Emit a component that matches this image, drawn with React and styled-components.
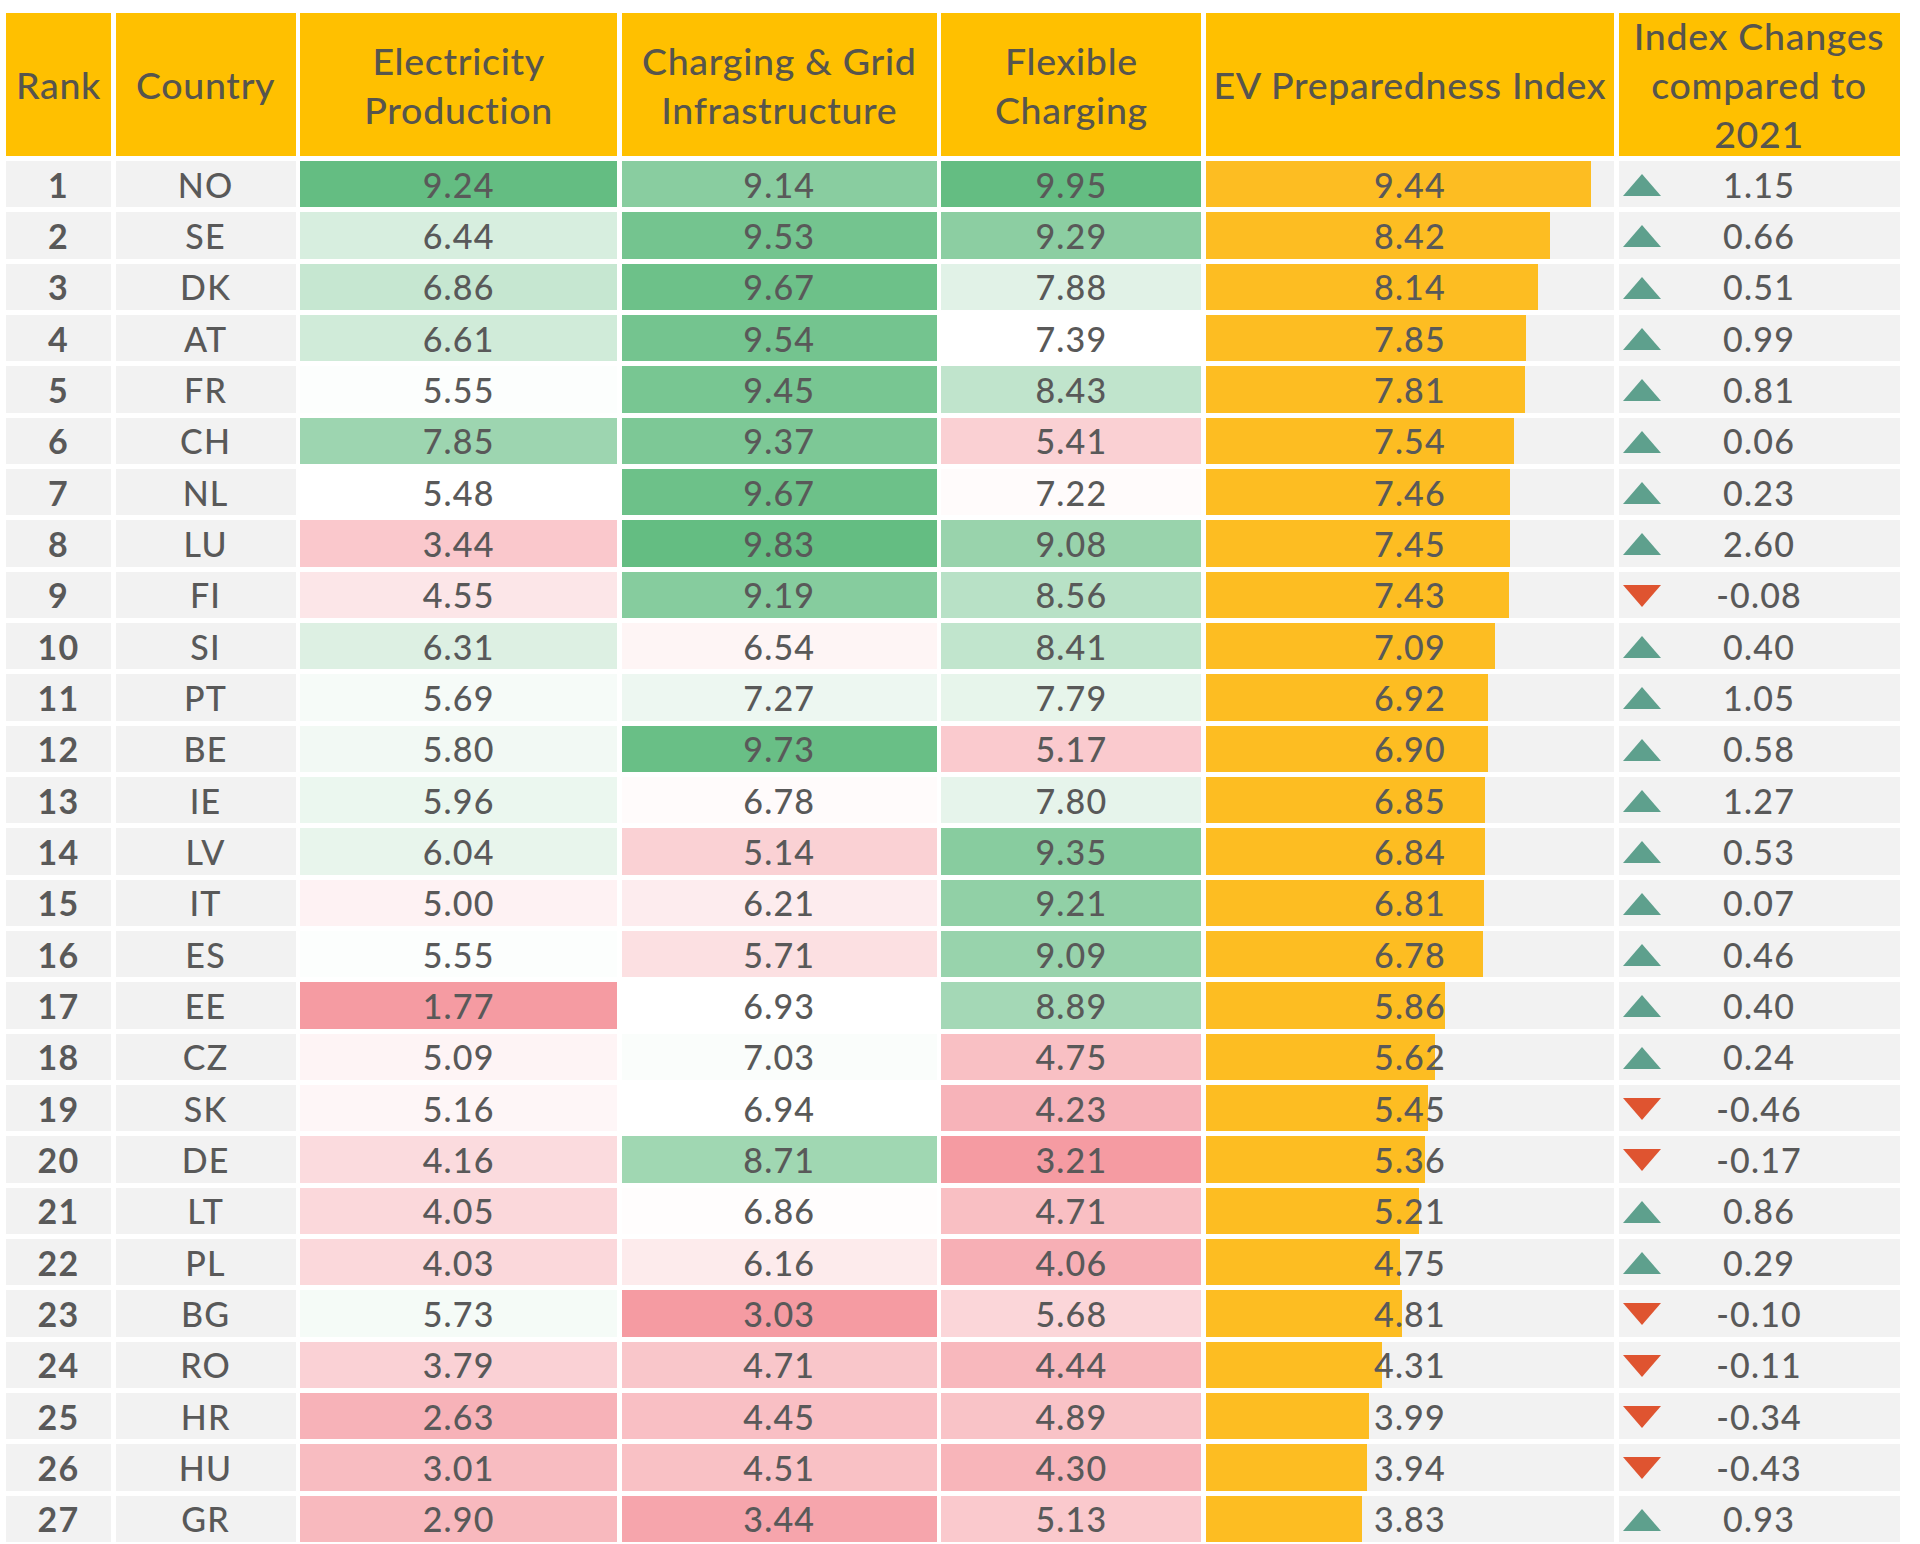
import React from "react";
import styled, { createGlobalStyle } from "styled-components";

const GlobalStyle = createGlobalStyle`
  html, body { margin: 0; padding: 0; background: #ffffff; }
  body { font-family: Lato, "Liberation Sans", sans-serif; }
`;

const rows = [
  [1, "NO", 9.24, 9.14, 9.95, 9.44, 1.15],
  [2, "SE", 6.44, 9.53, 9.29, 8.42, 0.66],
  [3, "DK", 6.86, 9.67, 7.88, 8.14, 0.51],
  [4, "AT", 6.61, 9.54, 7.39, 7.85, 0.99],
  [5, "FR", 5.55, 9.45, 8.43, 7.81, 0.81],
  [6, "CH", 7.85, 9.37, 5.41, 7.54, 0.06],
  [7, "NL", 5.48, 9.67, 7.22, 7.46, 0.23],
  [8, "LU", 3.44, 9.83, 9.08, 7.45, 2.6],
  [9, "FI", 4.55, 9.19, 8.56, 7.43, -0.08],
  [10, "SI", 6.31, 6.54, 8.41, 7.09, 0.4],
  [11, "PT", 5.69, 7.27, 7.79, 6.92, 1.05],
  [12, "BE", 5.8, 9.73, 5.17, 6.9, 0.58],
  [13, "IE", 5.96, 6.78, 7.8, 6.85, 1.27],
  [14, "LV", 6.04, 5.14, 9.35, 6.84, 0.53],
  [15, "IT", 5.0, 6.21, 9.21, 6.81, 0.07],
  [16, "ES", 5.55, 5.71, 9.09, 6.78, 0.46],
  [17, "EE", 1.77, 6.93, 8.89, 5.86, 0.4],
  [18, "CZ", 5.09, 7.03, 4.75, 5.62, 0.24],
  [19, "SK", 5.16, 6.94, 4.23, 5.45, -0.46],
  [20, "DE", 4.16, 8.71, 3.21, 5.36, -0.17],
  [21, "LT", 4.05, 6.86, 4.71, 5.21, 0.86],
  [22, "PL", 4.03, 6.16, 4.06, 4.75, 0.29],
  [23, "BG", 5.73, 3.03, 5.68, 4.81, -0.1],
  [24, "RO", 3.79, 4.71, 4.44, 4.31, -0.11],
  [25, "HR", 2.63, 4.45, 4.89, 3.99, -0.34],
  [26, "HU", 3.01, 4.51, 4.3, 3.94, -0.43],
  [27, "GR", 2.9, 3.44, 5.13, 3.83, 0.93],
];

const GREEN = [100, 189, 130];
const PINK = [245, 155, 162];
const WHITE = [255, 255, 255];

function stats(idx) {
  const vals = rows.map((r) => r[idx]).sort((a, b) => a - b);
  return { min: vals[0], med: vals[Math.floor(vals.length / 2)], max: vals[vals.length - 1] };
}
const colStats = { 2: stats(2), 3: stats(3), 4: stats(4) };

function mix(a, b, t) {
  const c = a.map((v, i) => Math.round(v + (b[i] - v) * t));
  return `rgb(${c[0]}, ${c[1]}, ${c[2]})`;
}
function scaleColor(v, idx) {
  const { min, med, max } = colStats[idx];
  if (v >= med) return mix(WHITE, GREEN, max === med ? 0 : (v - med) / (max - med));
  return mix(WHITE, PINK, (med - v) / (med - min));
}

const Page = styled.div`
  padding: 13px 20px 2px 6px;
`;

const Table = styled.div`
  display: grid;
  grid-template-columns: 105px 180px 317px 315px 260px 408px 281px;
  grid-template-rows: 143px repeat(27, 46.33px);
  column-gap: 4.6px;
  row-gap: 5px;
  width: 1894px;
`;

const Row = styled.div`
  display: contents;
`;

const HeaderCell = styled.div`
  background: #ffc000;
  color: #57554d;
  font-size: 37.5px;
  font-weight: 500;
  line-height: 49px;
  letter-spacing: 0.7px;
  display: flex;
  align-items: center;
  justify-content: center;
  text-align: center;
  white-space: nowrap;
  overflow: visible;
`;

const Cell = styled.div`
  background: ${(p) => p.$bg || "#f2f2f2"};
  color: #595959;
  font-size: 34px;
  font-weight: ${(p) => (p.$bold ? 700 : 500)};
  display: flex;
  align-items: center;
  justify-content: center;
  letter-spacing: 1.2px;
`;

const BarCell = styled(Cell)`
  background: linear-gradient(
    to right,
    #fdbd22 0,
    #fdbd22 ${(p) => p.$pct}%,
    #f2f2f2 ${(p) => p.$pct}%,
    #f2f2f2 100%
  );
`;

const ChangeCell = styled.div`
  background: #f2f2f2;
  color: #595959;
  font-size: 34px;
  font-weight: 500;
  letter-spacing: 1.2px;
  display: grid;
  grid-template-columns: 38px 1fr 38px;
  align-items: center;
  padding: 0 4px;
  text-align: center;
`;

const Arrow = styled.svg`
  display: block;
  width: 38px;
  height: 22px;
  margin-top: 2px;
`;

function Trend({ up }) {
  return (
    <Arrow viewBox="0 0 38 22">
      {up ? (
        <polygon points="19,0 38,22 0,22" fill="#5ea08d" />
      ) : (
        <polygon points="0,0 38,0 19,22" fill="#df5430" />
      )}
    </Arrow>
  );
}

const fmt = (v) => v.toFixed(2);

export default function App() {
  return (
    <>
      <GlobalStyle />
      <Page>
        <Table>
          <Row>
            <HeaderCell>Rank</HeaderCell>
            <HeaderCell>Country</HeaderCell>
            <HeaderCell>
              Electricity
              <br />
              Production
            </HeaderCell>
            <HeaderCell>
              Charging &amp; Grid
              <br />
              Infrastructure
            </HeaderCell>
            <HeaderCell>
              Flexible
              <br />
              Charging
            </HeaderCell>
            <HeaderCell>EV Preparedness Index</HeaderCell>
            <HeaderCell>
              Index Changes
              <br />
              compared to
              <br />
              2021
            </HeaderCell>
          </Row>
          {rows.map((r) => (
            <Row key={r[0]}>
              <Cell $bold>{r[0]}</Cell>
              <Cell>{r[1]}</Cell>
              <Cell $bg={scaleColor(r[2], 2)}>{fmt(r[2])}</Cell>
              <Cell $bg={scaleColor(r[3], 3)}>{fmt(r[3])}</Cell>
              <Cell $bg={scaleColor(r[4], 4)}>{fmt(r[4])}</Cell>
              <BarCell $pct={(r[5] * 10).toFixed(1)}>{fmt(r[5])}</BarCell>
              <ChangeCell>
                <Trend up={r[6] >= 0} />
                <span>{fmt(r[6])}</span>
                <span />
              </ChangeCell>
            </Row>
          ))}
        </Table>
      </Page>
    </>
  );
}
